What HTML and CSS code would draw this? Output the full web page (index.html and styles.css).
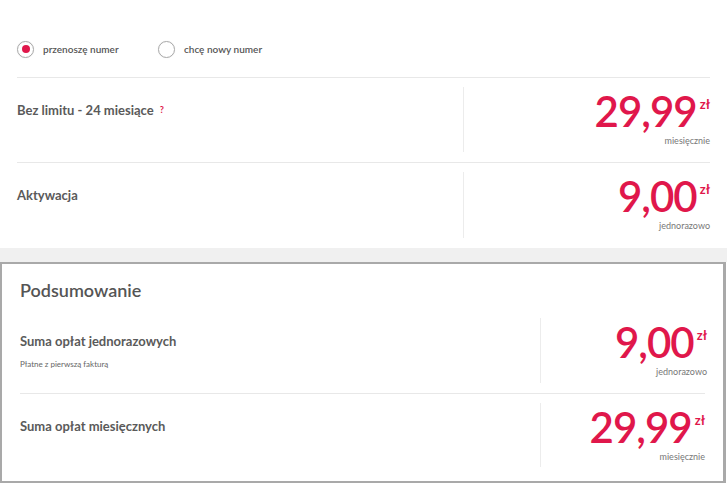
FILE: index.html
```html
<!DOCTYPE html>
<html lang="pl">
<head>
<meta charset="utf-8">
<link rel="stylesheet" href="styles.css">
</head>
<body>
<section class="offer">
  <div class="radios">
    <label class="radio"><span class="dot checked"></span>przenoszę numer</label>
    <label class="radio"><span class="dot"></span>chcę nowy numer</label>
  </div>
  <div class="row">
    <div class="label">Bez limitu - 24 miesiące <span class="q">?</span></div>
    <div class="divider"></div>
    <div class="price">
      <div class="amount"><span class="num">29,99</span><span class="cur">zł</span></div>
      <div class="period">miesięcznie</div>
    </div>
  </div>
  <div class="row">
    <div class="label">Aktywacja</div>
    <div class="divider"></div>
    <div class="price">
      <div class="amount"><span class="num">9,00</span><span class="cur">zł</span></div>
      <div class="period">jednorazowo</div>
    </div>
  </div>
</section>
<div class="band"></div>
<section class="summary">
  <h2 class="title">Podsumowanie</h2>
  <div class="row srow">
    <div class="label">Suma opłat jednorazowych
      <div class="note">Płatne z pierwszą fakturą</div>
    </div>
    <div class="divider"></div>
    <div class="price sprice">
      <div class="amount"><span class="num">9,00</span><span class="cur">zł</span></div>
      <div class="period">jednorazowo</div>
    </div>
  </div>
  <div class="row srow">
    <div class="label">Suma opłat miesięcznych</div>
    <div class="divider"></div>
    <div class="price sprice">
      <div class="amount"><span class="num">29,99</span><span class="cur">zł</span></div>
      <div class="period">miesięcznie</div>
    </div>
  </div>
</section>
</body>
</html>
```
FILE: styles.css
```css
* { box-sizing: border-box; }
body {
  margin: 0;
  font-family: Lato, "Open Sans", sans-serif;
  color: #555;
  background: #fff;
}
.offer {
  padding: 0 17px;
}
.radios {
  display: flex;
  height: 77px;
  padding-top: 41px;
}
.radio {
  display: flex;
  align-items: center;
  gap: 9px;
  font-size: 10px;
  font-weight: 600;
  color: #555;
  width: 141px;
  height: 16px;
}
.dot {
  width: 17px;
  height: 17px;
  border-radius: 50%;
  border: 1px solid #a8a8a8;
  box-shadow: 0 0 1px rgba(0,0,0,0.15);
  display: flex;
  align-items: center;
  justify-content: center;
  flex: none;
}
.dot.checked::after {
  content: "";
  width: 8px;
  height: 8px;
  border-radius: 50%;
  background: #e0174b;
}
.row {
  display: flex;
  border-top: 1px solid #e8e8e8;
  height: 85px;
}
.offer .row:last-child { height: 86px; }
.label {
  flex: 1;
  padding-top: 24px;
  font-size: 13px;
  font-weight: 700;
  color: #5a5a5a;
}
.q {
  color: #e0174b;
  font-size: 9px;
  margin-left: 3px;
  vertical-align: 2px;
}
.divider {
  width: 1px;
  background: #ececec;
  margin: 9px 0 10px;
}
.price {
  width: 246px;
  display: flex;
  flex-direction: column;
  align-items: flex-end;
  padding-top: 12px;
}
.amount {
  display: flex;
  align-items: flex-start;
  color: #e0174b;
}
.num {
  font-size: 42px;
  font-weight: 600;
  line-height: 42px;
  letter-spacing: -1px;
}
.cur {
  font-size: 13px;
  font-weight: 700;
  margin-top: 6px;
  margin-left: 3px;
}
.period {
  font-size: 9px;
  color: #777;
  margin-top: 3px;
}
.band {
  height: 14px;
  background: #f0f0f0;
}
.summary {
  border: 2px solid #a9a9a9;
  border-right-width: 3px;
  margin-right: 1px;
  padding: 0 16px 0 18px;
  height: 221px;
}
.title {
  margin: 0;
  padding-top: 15px;
  height: 45px;
  font-size: 18px;
  font-weight: 600;
  color: #555;
  line-height: 22px;
}
.summary .row:first-of-type { border-top: 0; }
.srow { height: 84px; }
.summary .srow:last-child { border-top: 1px solid #e8e8e8; margin-right: 2px; }
.note {
  font-size: 8px;
  font-weight: 400;
  color: #666;
  margin-top: 10px;
}
.sprice { width: 166px; }
.summary .srow:last-child .sprice { width: 164px; }
```
